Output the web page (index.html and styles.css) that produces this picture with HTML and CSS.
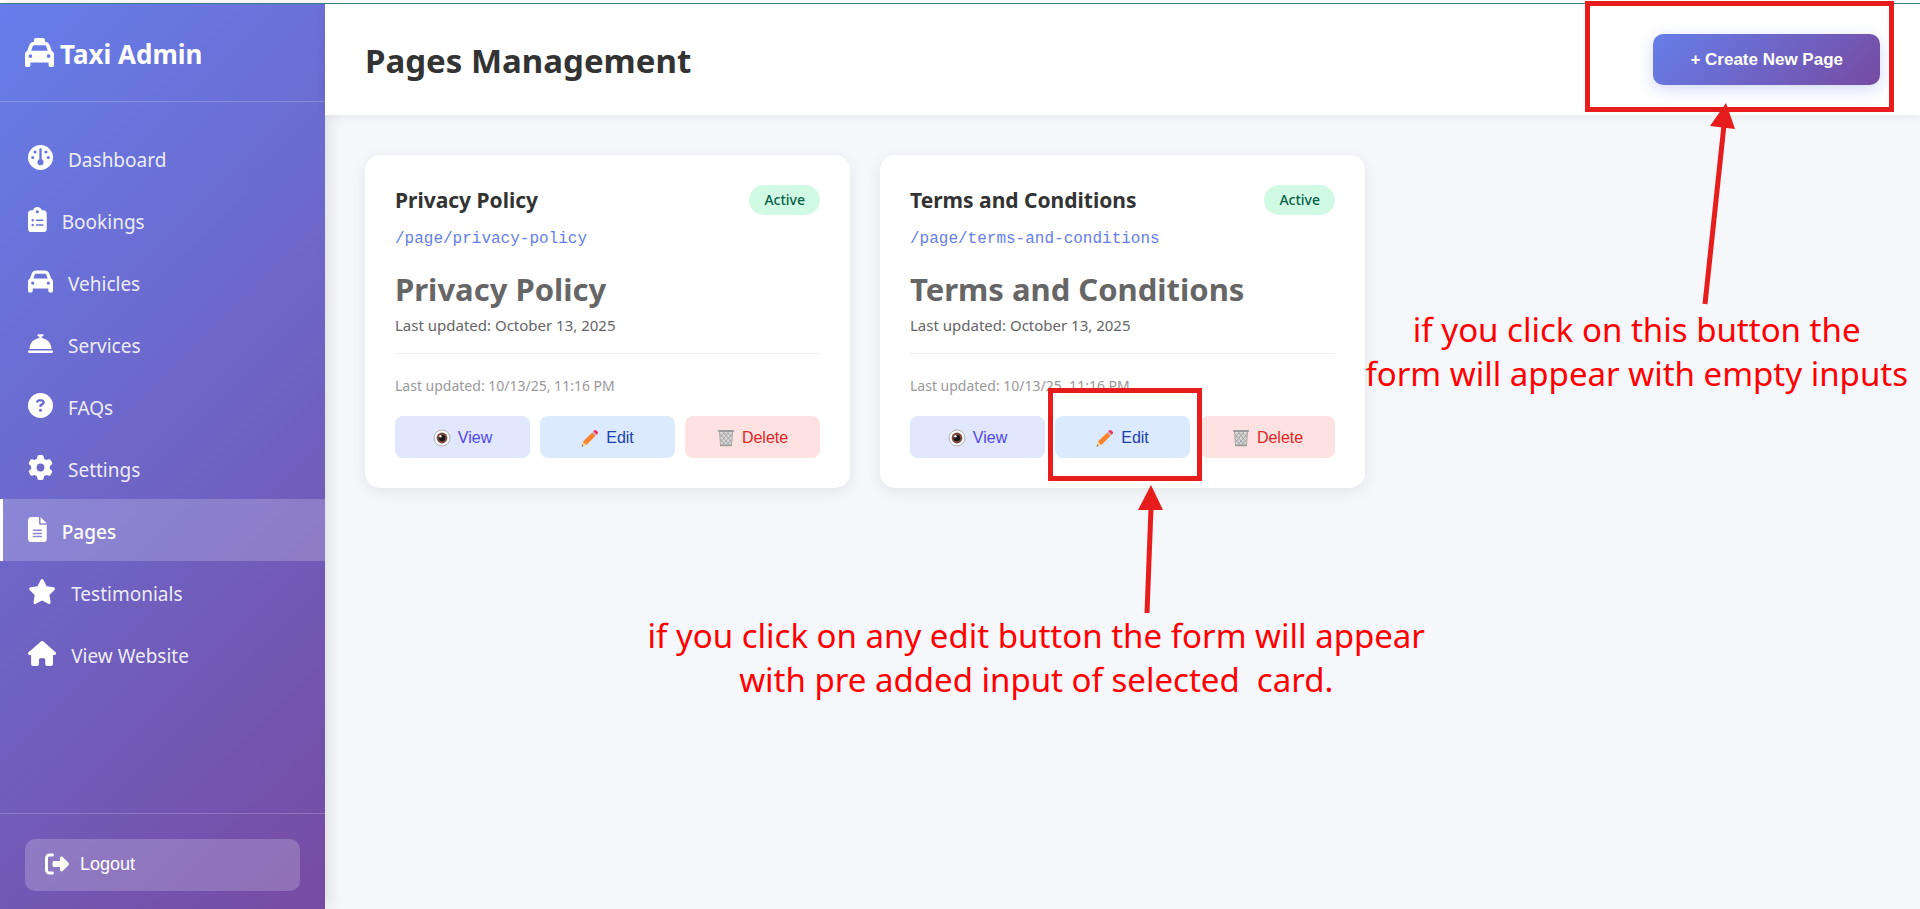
FILE: index.html
```html
<!DOCTYPE html>
<html lang="en">
<head>
    <meta charset="UTF-8">
    <meta name="viewport" content="width=device-width, initial-scale=1.0">
    <title>Taxi Admin - Pages Management</title>
    <link rel="stylesheet" href="styles.css">
</head>
<body>
    <!-- Shared emoji icons for the card buttons -->
    <svg class="icon-defs" aria-hidden="true">
        <symbol id="icon-eye" viewBox="0 0 18 18">
            <circle cx="9" cy="9" r="8" fill="#fff" stroke="#b4b0b2" stroke-width="1"/>
            <circle cx="9" cy="9" r="5.4" fill="#7a4a3a"/>
            <circle cx="9" cy="9" r="3.2" fill="#1c1618"/>
            <circle cx="7.4" cy="7.2" r="1.2" fill="#fff"/>
        </symbol>
        <symbol id="icon-pencil" viewBox="0 0 18 18">
            <path d="M.6 17.4L2 12.6l3.4 3.4z" fill="#ffce7c"/>
            <path d="M.6 17.4l.5-1.7 1.2 1.2z" fill="#444"/>
            <path d="M2 12.6L11.2 3.4l3.4 3.4L5.4 16z" fill="#ff822d"/>
            <path d="M11.2 3.4l1.3-1.3 3.4 3.4-1.3 1.3z" fill="#c3b6c8"/>
            <path d="M12.3 2.3l1-1c1.4-1.4 4.8 2 3.4 3.4l-1 1z" fill="#f8315f"/>
        </symbol>
        <symbol id="icon-trash" viewBox="0 0 18 18">
            <path d="M2.5 3h13l-1 13h-11z" fill="#d6d6d6"/>
            <path d="M3 5l9 10.5M6.5 3.5l7.5 9M10.5 3.5l4.5 5M3.5 10.5L8 15.5M15 5l-9 10.5M11.5 3.5L4 12.5M7.5 3.5L3 8.5M14.5 10.5L10 15.5" fill="none" stroke="#9b9b9b" stroke-width="0.8"/>
            <path d="M2.5 3l1 13M15.5 3l-1 13" stroke="#9b9b9b" stroke-width="0.8"/>
            <rect x="1" y="1" width="16" height="2" rx="0.8" fill="#9b9b9b"/>
            <rect x="3" y="15.5" width="12" height="1.8" rx="0.6" fill="#9b9b9b"/>
        </symbol>
    </svg>

    <div class="top-line"></div>

    <div class="layout">
        <!-- Sidebar -->
        <aside class="sidebar">
            <div class="sidebar-header">
                <svg class="logo-icon" viewBox="0 0 512 512" aria-hidden="true"><path d="M192 0c-17.7 0-32 14.3-32 32l0 32 0 .2c-38.6 2.2-72.3 27.3-85.2 64.1L39.6 228.8C16.4 238.4 0 261.3 0 288L0 432l0 48c0 17.7 14.3 32 32 32l32 0c17.7 0 32-14.3 32-32l0-48 320 0 0 48c0 17.7 14.3 32 32 32l32 0c17.7 0 32-14.3 32-32l0-48 0-144c0-26.7-16.4-49.6-39.6-59.2L437.2 128.3c-12.9-36.8-46.6-62-85.2-64.1l0-.2 0-32c0-17.7-14.3-32-32-32L192 0zM165.4 128l181.2 0c13.6 0 25.7 8.6 30.2 21.4L402.9 224l-293.8 0 26.1-74.6c4.5-12.8 16.6-21.4 30.2-21.4zM96 288a32 32 0 1 1 0 64 32 32 0 1 1 0-64zm288 32a32 32 0 1 1 64 0 32 32 0 1 1 -64 0z"/></svg>
                <h2>Taxi Admin</h2>
            </div>

            <nav class="sidebar-nav">
                <a class="nav-item" href="#dashboard">
                    <svg viewBox="0 0 512 512" aria-hidden="true"><path d="M0 256a256 256 0 1 1 512 0A256 256 0 1 1 0 256zm320 96c0-26.9-16.5-49.9-40-59.3L280 88c0-13.3-10.7-24-24-24s-24 10.7-24 24l0 204.7c-23.5 9.5-40 32.5-40 59.3c0 35.3 28.7 64 64 64s64-28.7 64-64zM144 176a32 32 0 1 0 0-64 32 32 0 1 0 0 64zm-16 80a32 32 0 1 0 -64 0 32 32 0 1 0 64 0zm288 32a32 32 0 1 0 0-64 32 32 0 1 0 0 64zM400 144a32 32 0 1 0 -64 0 32 32 0 1 0 64 0z"/></svg>
                    <span>Dashboard</span>
                </a>
                <a class="nav-item" href="#bookings">
                    <svg viewBox="0 0 384 512" aria-hidden="true"><path d="M192 0c-41.8 0-77.4 26.7-90.5 64L64 64C28.7 64 0 92.7 0 128L0 448c0 35.3 28.7 64 64 64l256 0c35.3 0 64-28.7 64-64l0-320c0-35.3-28.7-64-64-64l-37.5 0C269.4 26.7 233.8 0 192 0zm0 64a32 32 0 1 1 0 64 32 32 0 1 1 0-64zM72 272a24 24 0 1 1 48 0 24 24 0 1 1 -48 0zm104-16l128 0c8.8 0 16 7.2 16 16s-7.2 16-16 16l-128 0c-8.8 0-16-7.2-16-16s7.2-16 16-16zM72 368a24 24 0 1 1 48 0 24 24 0 1 1 -48 0zm88 0c0-8.8 7.2-16 16-16l128 0c8.8 0 16 7.2 16 16s-7.2 16-16 16l-128 0c-8.8 0-16-7.2-16-16z"/></svg>
                    <span>Bookings</span>
                </a>
                <a class="nav-item" href="#vehicles">
                    <svg viewBox="0 0 512 512" aria-hidden="true"><path d="M135.2 117.4L109.1 192l293.8 0-26.1-74.6C372.3 104.6 360.2 96 346.6 96L165.4 96c-13.6 0-25.7 8.6-30.2 21.4zM39.6 196.8L74.8 96.3C88.3 57.8 124.6 32 165.4 32l181.2 0c40.8 0 77.1 25.8 90.6 64.3l35.2 100.5c23.2 9.6 39.6 32.5 39.6 59.2l0 144 0 48c0 17.7-14.3 32-32 32l-32 0c-17.7 0-32-14.3-32-32l0-48L96 400l0 48c0 17.7-14.3 32-32 32l-32 0c-17.7 0-32-14.3-32-32l0-48L0 256c0-26.7 16.4-49.6 39.6-59.2zM128 288a32 32 0 1 0 -64 0 32 32 0 1 0 64 0zm288 32a32 32 0 1 0 0-64 32 32 0 1 0 0 64z"/></svg>
                    <span>Vehicles</span>
                </a>
                <a class="nav-item" href="#services">
                    <svg viewBox="0 0 512 512" aria-hidden="true"><path d="M216 64c-13.3 0-24 10.7-24 24s10.7 24 24 24l16 0 0 33.3C119.6 157.2 32 252.4 32 368l448 0c0-115.6-87.6-210.8-200-222.7l0-33.3 16 0c13.3 0 24-10.7 24-24s-10.7-24-24-24l-40 0-40 0zM24 400c-13.3 0-24 10.7-24 24s10.7 24 24 24l464 0c13.3 0 24-10.7 24-24s-10.7-24-24-24L24 400z"/></svg>
                    <span>Services</span>
                </a>
                <a class="nav-item" href="#faqs">
                    <svg viewBox="0 0 512 512" aria-hidden="true"><path d="M256 512A256 256 0 1 0 256 0a256 256 0 1 0 0 512zM169.8 165.3c7.9-22.3 29.1-37.3 52.8-37.3l58.3 0c34.9 0 63.1 28.3 63.1 63.1c0 22.6-12.1 43.5-31.7 54.8L280 264.4c-.2 13-10.9 23.6-24 23.6c-13.3 0-24-10.7-24-24l0-13.5c0-8.6 4.6-16.5 12.1-20.8l44.3-25.4c4.7-2.7 7.6-7.7 7.6-13.1c0-8.4-6.8-15.1-15.1-15.1l-58.3 0c-3.4 0-6.4 2.1-7.5 5.3l-.4 1.2c-4.4 12.5-18.2 19-30.6 14.6s-19-18.2-14.6-30.6l.4-1.2zM224 352a32 32 0 1 1 64 0 32 32 0 1 1 -64 0z"/></svg>
                    <span>FAQs</span>
                </a>
                <a class="nav-item" href="#settings">
                    <svg viewBox="0 0 512 512" aria-hidden="true"><path d="M495.9 166.6c3.2 8.7 .5 18.4-6.4 24.6l-43.3 39.4c1.1 8.3 1.7 16.8 1.7 25.4s-.6 17.1-1.7 25.4l43.3 39.4c6.9 6.2 9.6 15.9 6.4 24.6c-4.4 11.9-9.7 23.3-15.8 34.3l-4.7 8.1c-6.6 11-14 21.4-22.1 31.2c-5.9 7.2-15.7 9.6-24.5 6.8l-55.7-17.7c-13.4 10.3-28.2 18.9-44 25.4l-12.5 57.1c-2 9.1-9 16.3-18.2 17.8c-13.8 2.3-28 3.5-42.5 3.5s-28.7-1.2-42.5-3.5c-9.2-1.5-16.2-8.7-18.2-17.8l-12.5-57.1c-15.8-6.5-30.6-15.1-44-25.4L83.1 425.9c-8.8 2.8-18.6 .3-24.5-6.8c-8.1-9.8-15.5-20.2-22.1-31.2l-4.7-8.1c-6.1-11-11.4-22.4-15.8-34.3c-3.2-8.7-.5-18.4 6.4-24.6l43.3-39.4C64.6 273.1 64 264.6 64 256s.6-17.1 1.7-25.4L22.4 191.2c-6.9-6.2-9.6-15.9-6.4-24.6c4.4-11.9 9.7-23.3 15.8-34.3l4.7-8.1c6.6-11 14-21.4 22.1-31.2c5.9-7.2 15.7-9.6 24.5-6.8l55.7 17.7c13.4-10.3 28.2-18.9 44-25.4l12.5-57.1c2-9.1 9-16.3 18.2-17.8C227.3 1.2 241.5 0 256 0s28.7 1.2 42.5 3.5c9.2 1.5 16.2 8.7 18.2 17.8l12.5 57.1c15.8 6.5 30.6 15.1 44 25.4l55.7-17.7c8.8-2.8 18.6-.3 24.5 6.8c8.1 9.8 15.5 20.2 22.1 31.2l4.7 8.1c6.1 11 11.4 22.4 15.8 34.3zM256 336a80 80 0 1 0 0-160 80 80 0 1 0 0 160z"/></svg>
                    <span>Settings</span>
                </a>
                <a class="nav-item active" href="#pages">
                    <svg viewBox="0 0 384 512" aria-hidden="true"><path d="M64 0C28.7 0 0 28.7 0 64L0 448c0 35.3 28.7 64 64 64l256 0c35.3 0 64-28.7 64-64l0-288-128 0c-17.7 0-32-14.3-32-32L224 0 64 0zM256 0l0 128 128 0L256 0zM112 256l160 0c8.8 0 16 7.2 16 16s-7.2 16-16 16l-160 0c-8.8 0-16-7.2-16-16s7.2-16 16-16zm0 64l160 0c8.8 0 16 7.2 16 16s-7.2 16-16 16l-160 0c-8.8 0-16-7.2-16-16s7.2-16 16-16zm0 64l160 0c8.8 0 16 7.2 16 16s-7.2 16-16 16l-160 0c-8.8 0-16-7.2-16-16s7.2-16 16-16z"/></svg>
                    <span>Pages</span>
                </a>
                <a class="nav-item" href="#testimonials">
                    <svg viewBox="0 0 576 512" aria-hidden="true"><path d="M316.9 18C311.6 7 300.4 0 288.1 0s-23.4 7-28.8 18L195 150.3 51.4 171.5c-12 1.8-22 10.2-25.7 21.7s-.7 24.2 7.9 32.7L137.8 329 113.2 474.7c-2 12 3 24.2 12.9 31.3s23 8 33.8 2.3l128.3-68.5 128.3 68.5c10.8 5.7 23.9 4.9 33.8-2.3s14.9-19.3 12.9-31.3L438.5 329 542.7 225.9c8.6-8.5 11.7-21.2 7.9-32.7s-13.7-19.9-25.7-21.7L381.2 150.3 316.9 18z"/></svg>
                    <span>Testimonials</span>
                </a>
                <a class="nav-item" href="#website">
                    <svg viewBox="0 0 576 512" aria-hidden="true"><path d="M575.8 255.5c0 18-15 32.1-32 32.1l-32 0 .7 160.2c0 2.7-.2 5.4-.5 8.1l0 16.2c0 22.1-17.9 40-40 40l-16 0c-1.1 0-2.2 0-3.3-.1c-1.4 .1-2.8 .1-4.2 .1L416 512l-24 0c-22.1 0-40-17.9-40-40l0-24 0-64c0-17.7-14.3-32-32-32l-64 0c-17.7 0-32 14.3-32 32l0 64 0 24c0 22.1-17.9 40-40 40l-24 0-31.9 0c-1.5 0-3-.1-4.5-.2c-1.2 .1-2.4 .2-3.6 .2l-16 0c-22.1 0-40-17.9-40-40l0-112c0-.9 0-1.9 .1-2.8l0-69.6-32 0c-18 0-32-14-32-32.1c0-9 3-17 10-24L266.4 8c7-7 15-8 22-8s15 2 21 7L564.8 231.5c8 7 12 15 11 24z"/></svg>
                    <span>View Website</span>
                </a>
            </nav>

            <div class="sidebar-footer">
                <button class="logout-btn" type="button">
                    <svg viewBox="0 0 512 512" aria-hidden="true"><path d="M377.9 105.9L500.7 228.7c7.2 7.2 11.3 17.1 11.3 27.3s-4.1 20.1-11.3 27.3L377.9 406.1c-6.4 6.4-15 9.9-24 9.9c-18.7 0-33.9-15.2-33.9-33.9l0-62.1-128 0c-17.7 0-32-14.3-32-32l0-64c0-17.7 14.3-32 32-32l128 0 0-62.1c0-18.7 15.2-33.9 33.9-33.9c9 0 17.6 3.6 24 9.9zM160 96L96 96c-17.7 0-32 14.3-32 32l0 256c0 17.7 14.3 32 32 32l64 0c17.7 0 32 14.3 32 32s-14.3 32-32 32l-64 0c-53 0-96-43-96-96L0 128C0 75 43 32 96 32l64 0c17.7 0 32 14.3 32 32s-14.3 32-32 32z"/></svg>
                    Logout
                </button>
            </div>
        </aside>

        <!-- Main Content -->
        <main class="main">
            <header class="page-header">
                <h1>Pages Management</h1>
                <div class="note-anchor">
                    <button class="create-btn" type="button">+ Create New Page</button>
                    <!-- Note on the create button -->
                    <div class="note note-create">
                        <svg class="note-arrow" width="40" height="205" viewBox="0 0 40 205" aria-hidden="true">
                            <path d="M7 203L26 24" fill="none" stroke="#e71c1c" stroke-width="5"/>
                            <path d="M28 2L12 25l25 3z" fill="#e71c1c"/>
                        </svg>
                        <p class="note-text">if you click on this button the<br>form will appear with empty inputs</p>
                    </div>
                </div>
            </header>

            <section class="pages-grid">
                <article class="page-card">
                    <div class="card-header">
                        <h3>Privacy Policy</h3>
                        <span class="badge">Active</span>
                    </div>
                    <p class="slug">/page/privacy-policy</p>
                    <div class="preview">
                        <h1>Privacy Policy</h1>
                        <p>Last updated: October 13, 2025</p>
                    </div>
                    <p class="meta">Last updated: 10/13/25, 11:16 PM</p>
                    <div class="actions">
                        <button class="btn btn-view" type="button"><svg aria-hidden="true"><use href="#icon-eye"/></svg>View</button>
                        <button class="btn btn-edit" type="button"><svg aria-hidden="true"><use href="#icon-pencil"/></svg>Edit</button>
                        <button class="btn btn-delete" type="button"><svg aria-hidden="true"><use href="#icon-trash"/></svg>Delete</button>
                    </div>
                </article>

                <article class="page-card">
                    <div class="card-header">
                        <h3>Terms and Conditions</h3>
                        <span class="badge">Active</span>
                    </div>
                    <p class="slug">/page/terms-and-conditions</p>
                    <div class="preview">
                        <h1>Terms and Conditions</h1>
                        <p>Last updated: October 13, 2025</p>
                    </div>
                    <p class="meta">Last updated: 10/13/25, 11:16 PM</p>
                    <div class="actions">
                        <button class="btn btn-view" type="button"><svg aria-hidden="true"><use href="#icon-eye"/></svg>View</button>
                        <div class="note-anchor">
                            <button class="btn btn-edit" type="button"><svg aria-hidden="true"><use href="#icon-pencil"/></svg>Edit</button>
                            <!-- Note on the edit button -->
                            <div class="note note-edit">
                                <svg class="note-arrow" width="30" height="130" viewBox="0 0 30 130" aria-hidden="true">
                                    <path d="M11 129L15 24" fill="none" stroke="#e71c1c" stroke-width="5"/>
                                    <path d="M15 1L2 26h25z" fill="#e71c1c"/>
                                </svg>
                                <p class="note-text">if you click on any edit button the form will appear<br>with pre added input of selected&nbsp; card.</p>
                            </div>
                        </div>
                        <button class="btn btn-delete" type="button"><svg aria-hidden="true"><use href="#icon-trash"/></svg>Delete</button>
                    </div>
                </article>
            </section>
        </main>
    </div>
</body>
</html>
```
FILE: styles.css
```css
/* Base Styles */
* {
    box-sizing: border-box;
    margin: 0;
    padding: 0;
}

body {
    font-family: 'Segoe UI', 'Noto Sans', sans-serif;
    background: #f5f7fb;
    color: #333;
    min-height: 100vh;
    display: flex;
    flex-direction: column;
    overflow-x: hidden;
}

.icon-defs {
    position: absolute;
    width: 0;
    height: 0;
}

.top-line {
    height: 4px;
    background: #fff;
    border-bottom: 1px solid #3d8489;
}

.layout {
    display: flex;
    flex: 1;
}

/* Sidebar */
.sidebar {
    width: 325px;
    flex-shrink: 0;
    display: flex;
    flex-direction: column;
    background: linear-gradient(135deg, #667eea 0%, #764ba2 100%);
    box-shadow: 4px 0 15px rgba(0, 0, 0, 0.1);
    color: #fff;
    position: relative;
    z-index: 1;
}

.sidebar svg {
    fill: currentColor;
}

.sidebar-header {
    display: flex;
    align-items: center;
    gap: 6px;
    height: 98px;
    padding: 0 25px;
    border-bottom: 1px solid rgba(255, 255, 255, 0.2);
}

.sidebar-header h2 {
    padding-top: 2px;
    font-size: 26px;
    line-height: 36px;
}

.logo-icon {
    width: 29px;
    height: 29px;
}

.sidebar-nav {
    flex: 1;
    padding: 25px 0;
}

.nav-item {
    display: flex;
    align-items: center;
    gap: 15px;
    height: 62px;
    padding: 0 25px 2px;
    border-left: 3px solid transparent;
    color: rgba(255, 255, 255, 0.9);
    font-size: 19px;
    text-decoration: none;
}

.nav-item svg {
    height: 25px;
    color: #fff;
}

.nav-item span {
    padding-top: 5px;
}

.nav-item.active {
    background: rgba(255, 255, 255, 0.2);
    border-left-color: #fff;
    color: #fff;
    font-weight: 500;
}

.sidebar-footer {
    padding: 25px 25px 18px;
    border-top: 1px solid rgba(255, 255, 255, 0.2);
}

.logout-btn {
    display: flex;
    align-items: center;
    gap: 11px;
    width: 100%;
    height: 52px;
    padding: 0 20px 2px;
    border: none;
    border-radius: 10px;
    background: rgba(255, 255, 255, 0.2);
    color: #fff;
    font-family: 'Liberation Sans', Arial, sans-serif;
    font-size: 18px;
    cursor: pointer;
}

.logout-btn svg {
    width: 24px;
    height: 24px;
}

/* Main Content */
.main {
    flex: 1;
    min-width: 0;
}

.page-header {
    display: flex;
    justify-content: space-between;
    align-items: flex-start;
    height: 111px;
    padding: 30px 40px;
    background: #fff;
    box-shadow: 0 2px 10px rgba(0, 0, 0, 0.05);
    position: relative;
    z-index: 2;
}

.page-header h1 {
    font-size: 33px;
    line-height: 54px;
}

.create-btn {
    height: 51px;
    padding: 0 37px;
    border: none;
    border-radius: 10px;
    background: linear-gradient(135deg, #667eea 0%, #764ba2 100%);
    box-shadow: 0 4px 15px rgba(102, 126, 234, 0.3);
    color: #fff;
    font-family: 'Liberation Sans', Arial, sans-serif;
    font-size: 17px;
    font-weight: 700;
    cursor: pointer;
}

/* Page Cards */
.pages-grid {
    display: grid;
    grid-template-columns: repeat(3, 1fr);
    gap: 30px;
    padding: 40px;
}

.page-card {
    padding: 30px;
    border-radius: 15px;
    background: #fff;
    box-shadow: 0 4px 15px rgba(0, 0, 0, 0.08);
}

.card-header {
    display: flex;
    justify-content: space-between;
    align-items: center;
    height: 30px;
    margin-bottom: 12px;
}

.card-header h3 {
    font-size: 21px;
}

.badge {
    padding: 0 15px;
    border-radius: 20px;
    background: #d1fae5;
    color: #065f46;
    font-size: 14px;
    font-weight: 500;
    line-height: 30px;
}

.slug {
    margin-bottom: 16px;
    color: #667eea;
    font-family: 'Courier New', 'Liberation Mono', monospace;
    font-size: 16px;
    line-height: 24px;
}

.preview {
    padding-bottom: 15px;
    margin-bottom: 20px;
    border-bottom: 1px solid #f0f0f0;
    color: #666;
}

.preview h1 {
    font-size: 31px;
    line-height: 44px;
}

.preview p {
    padding-top: 1px;
    font-size: 15px;
    line-height: 26px;
}

.meta {
    margin-bottom: 18px;
    color: #999;
    font-size: 14px;
    line-height: 24px;
}

.actions {
    display: grid;
    grid-template-columns: repeat(3, 1fr);
    gap: 10px;
}

.btn {
    display: flex;
    justify-content: center;
    align-items: center;
    gap: 7px;
    width: 100%;
    height: 42px;
    padding-top: 2px;
    border: none;
    border-radius: 8px;
    font-family: 'Liberation Sans', Arial, sans-serif;
    font-size: 16px;
    cursor: pointer;
}

.btn svg {
    width: 18px;
    height: 18px;
}

.btn-view {
    background: #e0e7ff;
    color: #4f46e5;
}

.btn-edit {
    background: #dbeafe;
    color: #1e40af;
}

.btn-delete {
    background: #fee2e2;
    color: #dc2626;
}

/* Notes over the page */
.note-anchor {
    position: relative;
}

.note {
    position: absolute;
    border: 5px solid #e71c1c;
    pointer-events: none;
    z-index: 3;
}

.note-create {
    inset: -33px -14px -27px -68px;
}

.note-edit {
    inset: -28px -12px -23px -7px;
}

.note-arrow,
.note-text {
    position: absolute;
}

.note-create .note-arrow {
    top: 95px;
    left: 108px;
}

.note-edit .note-arrow {
    top: 91px;
    left: 83px;
}

.note-text {
    color: #ff0000;
    font-size: 33px;
    line-height: 44px;
    text-align: center;
    white-space: nowrap;
}

.note-create .note-text {
    top: 302px;
    right: -19px;
}

.note-edit .note-text {
    top: 221px;
    right: -228px;
}
```
